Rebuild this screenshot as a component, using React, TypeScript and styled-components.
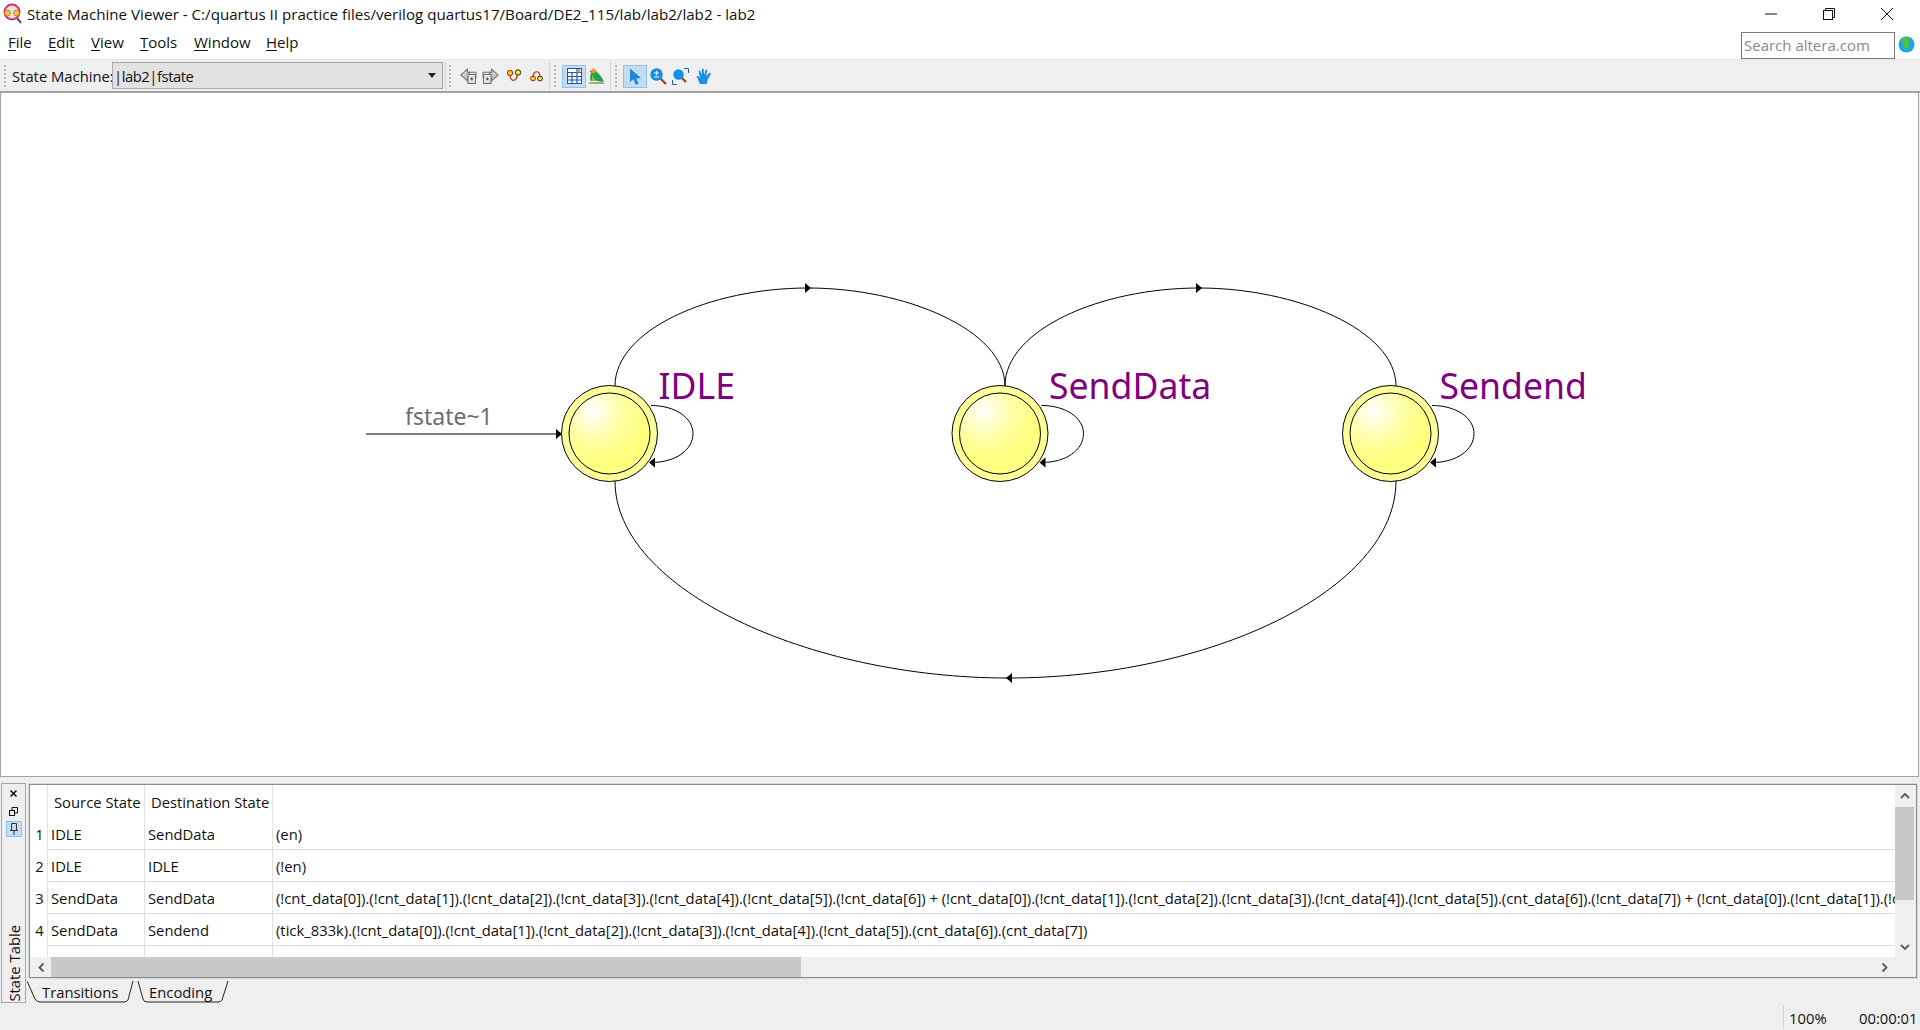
import React from "react";
import styled, { createGlobalStyle } from "styled-components";

const Global = createGlobalStyle`
  html, body { margin: 0; padding: 0; background: #efefef; overflow: hidden; }
  * { box-sizing: border-box; }
`;

const Window = styled.div`
  width: 1920px;
  height: 1030px;
  display: flex;
  flex-direction: column;
  font-family: "Open Sans", "Noto Sans", sans-serif;
  font-size: 14.8px;
  color: #111;
  background: #efefef;
`;

const TitleBar = styled.div`
  height: 27px;
  flex: none;
  background: #fff;
  display: flex;
  align-items: center;
  padding: 0 4px 0 3px;
`;
const TitleText = styled.span`
  margin-left: 4px;
  font-size: 15.15px;
  white-space: nowrap;
  flex: 1;
`;
const WinButton = styled.div`
  width: 58px;
  height: 27px;
  display: flex;
  align-items: center;
  justify-content: center;
`;

const MenuBar = styled.div`
  height: 33px;
  flex: none;
  background: #fff;
  display: flex;
  align-items: center;
  padding-left: 8px;
  border-bottom: 1px solid #e8e8e8;
`;
const MenuItem = styled.span<{ $w: number }>`
  width: ${(p) => p.$w}px;
  font-size: 15px;
  flex: none;
  margin-top: -2px;
  u { text-underline-offset: 2px; }
`;
const SearchBox = styled.div`
  margin-left: auto;
  width: 154px;
  height: 27px;
  margin-top: 5px;
  border: 1px solid #7a7a7a;
  background: #fff;
  color: #8a8a8a;
  font-size: 15px;
  line-height: 25px;
  padding-left: 2px;
  white-space: nowrap;
  overflow: hidden;
`;
const GlobeSlot = styled.div`
  width: 25px;
  flex: none;
  display: flex;
  justify-content: center;
  padding-right: 3px;
  margin-top: 3px;
`;

const Toolbar = styled.div`
  height: 33px;
  flex: none;
  display: flex;
  align-items: center;
  padding-left: 4px;
  background: #efefef;
  border-bottom: 2px solid #a2a2a2;
`;
const Grip = styled.div<{ $ml?: number; $mr?: number }>`
  width: 2px;
  height: 22px;
  flex: none;
  margin-left: ${(p) => p.$ml ?? 0}px;
  margin-right: ${(p) => p.$mr ?? 0}px;
  background: repeating-linear-gradient(to bottom, #b8b8b8 0 2px, transparent 2px 4px);
`;
const Sep = styled.div<{ $ml?: number }>`
  width: 1px;
  height: 28px;
  flex: none;
  background: #d4d4d4;
  margin-left: ${(p) => p.$ml ?? 0}px;
`;
const ComboLabel = styled.span`
  margin-left: 6px;
  width: 100px;
  flex: none;
  font-size: 14.8px;
  white-space: nowrap;
`;
const Combo = styled.div`
  width: 331px;
  height: 27px;
  flex: none;
  display: flex;
  align-items: center;
  justify-content: space-between;
  border: 1px solid #a8a8a8;
  background: #e2e2e2;
  padding: 0 6px 0 1px;
  font-size: 14.8px;
  letter-spacing: -0.45px;
`;
const ComboCaret = styled.span`
  width: 0;
  height: 0;
  border-left: 4px solid transparent;
  border-right: 4px solid transparent;
  border-top: 5px solid #222;
`;
const Tool = styled.div<{ $w?: number; $on?: boolean; $ml?: number }>`
  width: ${(p) => p.$w ?? 22}px;
  height: 23px;
  flex: none;
  margin-left: ${(p) => p.$ml ?? 0}px;
  margin-top: 1px;
  display: flex;
  align-items: center;
  justify-content: center;
  background: ${(p) => (p.$on ? "#c3dcf3" : "transparent")};
  border: 1px solid ${(p) => (p.$on ? "#8fc2ef" : "transparent")};
`;

const Canvas = styled.div`
  flex: none;
  height: 684px;
  background: #fff;
  border: 1px solid #a2a2a2;
  border-top: none;
  margin-right: 1px;
`;
const DiagramSvg = styled.svg`
  display: block;
  width: 100%;
  height: 100%;
  font-family: "Noto Sans", "Open Sans", sans-serif;
`;

const Dock = styled.div`
  flex: none;
  height: 220px;
  margin-top: 6px;
  padding-left: 1px;
  display: flex;
  gap: 3px;
`;
const DockStrip = styled.div`
  width: 25px;
  flex: none;
  border: 1px solid #a6a6a6;
  display: flex;
  flex-direction: column;
  align-items: center;
  padding-top: 1px;
  background: #efefef;
`;
const DockBtn = styled.div<{ $on?: boolean }>`
  width: 16px;
  height: 16px;
  margin-bottom: 2px;
  display: flex;
  align-items: center;
  justify-content: center;
  background: ${(p) => (p.$on ? "#c3dcf3" : "transparent")};
  border: 1px solid ${(p) => (p.$on ? "#8fc2ef" : "transparent")};
`;
const DockTitle = styled.span`
  margin-top: auto;
  writing-mode: vertical-rl;
  transform: rotate(180deg);
  font-size: 14.8px;
  line-height: 20px;
  white-space: nowrap;
`;
const DockMain = styled.div`
  flex: 1;
  min-width: 0;
  display: flex;
  flex-direction: column;
  padding-right: 3px;
`;
const TableFrame = styled.div`
  height: 194px;
  flex: none;
  margin-top: 1px;
  border: 1px solid #8b8b95;
  outline: 1px solid #dadada;
  display: flex;
  flex-direction: column;
  background: #efefef;
`;
const TableRegion = styled.div`
  flex: 1;
  min-height: 0;
  display: flex;
`;
const TableBody = styled.div`
  flex: 1;
  min-width: 0;
  background: #fff;
  overflow: hidden;
`;
const Row = styled.div<{ $h: number; $line?: boolean }>`
  height: ${(p) => p.$h}px;
  display: grid;
  grid-template-columns: 18px 97px 128px 1fr;
  align-items: stretch;
  > * + * {
    border-bottom: ${(p) => (p.$line ? "1px solid #dcdcdc" : "none")};
  }
`;
const Cell = styled.div<{ $pl?: number; $last?: boolean }>`
  padding-left: ${(p) => p.$pl ?? 3}px;
  border-right: ${(p) => (p.$last ? "none" : "1px solid #e2e2e2")};
  display: flex;
  align-items: center;
  font-size: 14.8px;
  white-space: nowrap;
  overflow: hidden;
  min-width: 0;
`;
const NumCell = styled.div`
  border-right: 1px solid #e2e2e2;
  display: flex;
  align-items: center;
  justify-content: center;
  padding-left: 2px;
  font-size: 14.8px;
`;
const VScroll = styled.div`
  width: 21px;
  flex: none;
  display: flex;
  flex-direction: column;
  background: #efefef;
`;
const ScrollBtn = styled.div<{ $s: number }>`
  width: ${(p) => p.$s}px;
  height: 20px;
  flex: none;
  display: flex;
  align-items: center;
  justify-content: center;
`;
const VThumb = styled.div`
  width: 19px;
  height: 93px;
  flex: none;
  margin-top: 2px;
  background: #c8c8c8;
`;
const ScrollSpace = styled.div`
  flex: 1;
`;
const ScrollCorner = styled.div`
  width: 21px;
  flex: none;
`;
const HScroll = styled.div`
  height: 20px;
  flex: none;
  display: flex;
  align-items: center;
  background: #efefef;
`;
const HThumb = styled.div`
  width: 750px;
  height: 20px;
  flex: none;
  background: #c8c8c8;
`;
const TabRow = styled.div`
  display: flex;
  height: 24px;
  margin-top: 2px;
  margin-left: -2px;
`;
const Tab = styled.div<{ $w: number; $ml?: number; $pl: number }>`
  position: relative;
  width: ${(p) => p.$w}px;
  margin-left: ${(p) => p.$ml ?? 0}px;
  padding-left: ${(p) => p.$pl}px;
  font-size: 14.8px;
  line-height: 25px;
  svg {
    position: absolute;
    left: 0;
    top: 0;
  }
`;
const StatusBar = styled.div`
  flex: 1;
  display: flex;
  align-items: center;
  justify-content: flex-end;
  padding-top: 2px;
`;
const StatusPct = styled.span`
  border-left: 1px solid #d4d4d4;
  padding-left: 5px;
  width: 76px;
  height: 23px;
  line-height: 25px;
  font-size: 14.8px;
`;
const StatusTime = styled.span`
  width: 61px;
  font-size: 14.8px;
  line-height: 25px;
  height: 23px;
  white-space: nowrap;
`;

const Arrowhead = ({ x, y, dir }: { x: number; y: number; dir: "l" | "r" }) => (
  <polygon
    points={
      dir === "r"
        ? `${x},${y} ${x - 6},${y - 5} ${x - 6},${y + 5}`
        : `${x},${y} ${x + 6},${y - 5} ${x + 6},${y + 5}`
    }
    fill="#000"
  />
);

const StateNode = ({ cx, name }: { cx: number; name: string }) => (
  <g>
    <circle cx={cx} cy={433.5} r={48} fill="#ffff99" stroke="#000" strokeWidth={1} />
    <circle cx={cx} cy={433.5} r={40.5} fill="url(#stateFill)" stroke="#000" strokeWidth={1} />
    <path
      d={`M${cx + 41.5},405.5 C${cx + 66},405.5 ${cx + 83.5},418 ${cx + 83.5},433.5 C${cx + 83.5},450 ${cx + 66},462.5 ${cx + 42},462.5`}
      fill="none"
      stroke="#000"
    />
    <Arrowhead x={cx + 39.5} y={462.5} dir="l" />
    <text x={cx + 49} y={399} fontSize={35.6} fill="#800080">
      {name}
    </text>
  </g>
);

const Diagram = () => (
  <DiagramSvg viewBox="1 93 1917 683" preserveAspectRatio="none">
    <defs>
      <radialGradient id="stateFill" cx="0.3" cy="0.22" r="0.62">
        <stop offset="0" stopColor="#ffffff" />
        <stop offset="0.55" stopColor="#ffffa8" />
        <stop offset="1" stopColor="#ffff80" />
      </radialGradient>
    </defs>
    <path d="M615,386 C615,330 710,288 808,288 C905,288 1005,330 1005,386" fill="none" stroke="#000" />
    <Arrowhead x={811} y={288} dir="r" />
    <path d="M1005,386 C1005,330 1100,288 1199,288 C1296,288 1396,330 1396,386" fill="none" stroke="#000" />
    <Arrowhead x={1202} y={288} dir="r" />
    <path d="M1396,481 C1396,590 1210,678 1008,678 C810,678 615,590 615,481" fill="none" stroke="#000" />
    <Arrowhead x={1006} y={678} dir="l" />
    <path d="M366,434 H557" fill="none" stroke="#000" />
    <Arrowhead x={562} y={434} dir="r" />
    <text x={405} y={425} fontSize={23} fill="#6e6e6e">
      fstate~1
    </text>
    <StateNode cx={609.5} name="IDLE" />
    <StateNode cx={1000} name="SendData" />
    <StateNode cx={1390.5} name="Sendend" />
  </DiagramSvg>
);

const AppLogo = () => (
  <svg width="20" height="22" viewBox="0 0 20 22">
    <circle cx="9" cy="9" r="7.5" fill="#f6dfe6" stroke="#c9386a" strokeWidth="2" />
    <circle cx="9" cy="9" r="3.5" fill="#dfe6f0" />
    <circle cx="4.5" cy="10" r="3" fill="#f2c43c" stroke="#8a6a10" strokeWidth="0.6" />
    <circle cx="13.5" cy="10" r="3" fill="#f2c43c" stroke="#8a6a10" strokeWidth="0.6" />
    <path d="M14,15 L18,20" stroke="#5a5a5a" strokeWidth="2.2" />
  </svg>
);
const Globe = () => (
  <svg width="17" height="17" viewBox="0 0 17 17">
    <circle cx="8.5" cy="8.5" r="8" fill="#1ba6ea" />
    <path d="M5,2 L10,1.6 L12,3.5 L10,6 L12,8 L9,12 L8,15 L6.5,11 L5,8 L3,6 Z" fill="#54c22c" />
  </svg>
);
const GoArrow = ({ flip }: { flip?: boolean }) => (
  <svg width="17" height="16" viewBox="0 0 16 15" style={flip ? { transform: "scaleX(-1)" } : undefined}>
    <path d="M7,1 L0.8,6.5 L7,12 V9 H9 V4 H7 Z" fill="#c8c8c8" stroke="#777" strokeWidth="1" />
    <path d="M7,4 H15 V9 H13" fill="none" stroke="#777" />
    <rect x="7.5" y="6" width="7" height="8.5" fill="#e6e6e6" stroke="#6e6e6e" />
    <rect x="10" y="9" width="2" height="2.5" fill="#555" />
  </svg>
);
const NodesA = () => (
  <svg width="15" height="14" viewBox="0 0 15 14">
    <path d="M3,7 C4,13 10,13 10.5,5" fill="none" stroke="#d02020" strokeWidth="1.2" />
    <circle cx="3" cy="4" r="2.7" fill="#ffd21e" stroke="#c01818" />
    <circle cx="11" cy="3.5" r="2.7" fill="#f6ee2c" stroke="#222" />
  </svg>
);
const NodesB = () => (
  <svg width="13" height="12" viewBox="0 0 13 12">
    <path d="M3,7 C3,0 10,0 10,7" fill="none" stroke="#d02020" strokeWidth="1.2" />
    <circle cx="3" cy="8.5" r="2.4" fill="#ffd21e" stroke="#c01818" />
    <circle cx="10" cy="8.5" r="2.4" fill="#f6ee2c" stroke="#222" />
  </svg>
);
const TableIcon = () => (
  <svg width="15" height="16" viewBox="0 0 15 16">
    <rect x="0.5" y="0.5" width="14" height="15" fill="#fff" stroke="#1a5ca8" />
    <path d="M0,4.5 H15 M0,8.5 H15 M0,12 H15 M5,4.5 V16 M10,0 V16" stroke="#1a5ca8" strokeWidth="1.2" />
    <rect x="9.8" y="1" width="3.2" height="3.4" fill="#f2902a" />
  </svg>
);
const Bird = () => (
  <svg width="17" height="17" viewBox="0 0 17 17">
    <path d="M0,16 H17 L15,14 H2 Z" fill="#b6a58e" />
    <path d="M3,13 C1,9 3,4 5,2 L8,3 C11,6 14,9 16,14 L8,13 Z" fill="#22a04a" />
    <path d="M4,6 C5,9 7,12 10,13 L4,13 Z" fill="#7ac943" />
    <circle cx="5.5" cy="3" r="2.4" fill="#f29a2a" />
    <path d="M3,2.5 L1.5,4 L3.4,4.2 Z" fill="#8a2a10" />
  </svg>
);
const Pointer = () => (
  <svg width="14" height="17" viewBox="0 0 14 17">
    <path d="M2,0.5 L13,10 L8.3,10.4 L10.6,16 L7.5,16.5 L5.5,11 L2,14 Z" fill="#1a86dc" />
  </svg>
);
const ZoomIn = () => (
  <svg width="17" height="17" viewBox="0 0 17 17">
    <path d="M10.5,10.5 L16,16" stroke="#b5342a" strokeWidth="2.2" />
    <circle cx="6.5" cy="6.5" r="6.2" fill="#0f90e0" />
    <path d="M4,5 H9 M6.5,2.8 V7.2 M4,9 H9" stroke="#fff" strokeWidth="1.2" />
  </svg>
);
const ZoomRegion = () => (
  <svg width="17" height="17" viewBox="0 0 17 17">
    <path d="M0.5,12 V16.5 H5 M12,0.5 H16.5 V5" fill="none" stroke="#1a5ca8" strokeWidth="1" />
    <path d="M9.5,9.5 L14,14" stroke="#b5342a" strokeWidth="2.2" />
    <circle cx="6.5" cy="6.5" r="5.2" fill="#0f90e0" />
  </svg>
);
const HandIcon = () => (
  <svg width="16" height="17" viewBox="0 0 16 17">
    <path
      d="M4,16 L0.5,8.5 L1.8,7.8 L4,10 L2.6,3 L4.2,2.6 L6,7 L5.8,1 L7.6,0.8 L8.2,7 L9.6,1.6 L11.2,2 L10.2,8 L13.8,4.6 L15,5.8 L11.6,11.5 L10.8,16 Z"
      fill="#1890e6"
    />
  </svg>
);
const Minimize = () => (
  <svg width="12" height="12" viewBox="0 0 12 12">
    <path d="M0,6 H12" stroke="#111" />
  </svg>
);
const Restore = () => (
  <svg width="12" height="12" viewBox="0 0 12 12">
    <rect x="0.5" y="2.5" width="9" height="9" fill="#fff" stroke="#111" />
    <path d="M2.5,2.5 V0.5 H11.5 V9.5 H9.5" fill="none" stroke="#111" />
  </svg>
);
const CloseX = () => (
  <svg width="12" height="12" viewBox="0 0 12 12">
    <path d="M0,0 L12,12 M12,0 L0,12" stroke="#111" />
  </svg>
);
const Chevron = ({ dir }: { dir: "up" | "down" | "left" | "right" }) => {
  const rot = { up: 0, right: 90, down: 180, left: 270 }[dir];
  return (
    <svg width="10" height="7" viewBox="0 0 10 7" style={{ transform: `rotate(${rot}deg)` }}>
      <path d="M1,6 L5,2 L9,6" fill="none" stroke="#5a5a5a" strokeWidth="1.8" />
    </svg>
  );
};
const DockClose = () => (
  <svg width="7" height="7" viewBox="0 0 7 7">
    <path d="M0.5,0.5 L6.5,6.5 M6.5,0.5 L0.5,6.5" stroke="#111" strokeWidth="1.5" />
  </svg>
);
const DockFloat = () => (
  <svg width="9" height="9" viewBox="0 0 9 9">
    <rect x="0.5" y="3.5" width="5" height="5" fill="none" stroke="#111" />
    <path d="M3,3 V0.5 H8.5 V6 H6" fill="none" stroke="#111" />
  </svg>
);
const DockPin = () => (
  <svg width="8" height="12" viewBox="0 0 8 12">
    <path d="M1.5,0.5 H6.5 V7.5 H1.5 Z M0,7.5 H8 M4,8 V12" fill="none" stroke="#333" />
  </svg>
);

const TabShape = ({ w, d }: { w: number; d: string }) => (
  <svg width={w} height="24" viewBox={`0 0 ${w} 24`}>
    <path d={d} fill="none" stroke="#222" />
  </svg>
);

const ROW3 =
  "(!cnt_data[0]).(!cnt_data[1]).(!cnt_data[2]).(!cnt_data[3]).(!cnt_data[4]).(!cnt_data[5]).(!cnt_data[6]) + (!cnt_data[0]).(!cnt_data[1]).(!cnt_data[2]).(!cnt_data[3]).(!cnt_data[4]).(!cnt_data[5]).(cnt_data[6]).(!cnt_data[7]) + (!cnt_data[0]).(!cnt_data[1]).(!cnt_data[2]).(!cnt_data[3])";
const ROW4 =
  "(tick_833k).(!cnt_data[0]).(!cnt_data[1]).(!cnt_data[2]).(!cnt_data[3]).(!cnt_data[4]).(!cnt_data[5]).(cnt_data[6]).(cnt_data[7])";

const rows = [
  ["1", "IDLE", "SendData", "(en)"],
  ["2", "IDLE", "IDLE", "(!en)"],
  ["3", "SendData", "SendData", ROW3],
  ["4", "SendData", "Sendend", ROW4],
];

export default function App() {
  return (
    <Window>
      <Global />
      <TitleBar>
        <AppLogo />
        <TitleText>
          State Machine Viewer - C:/quartus II practice files/verilog quartus17/Board/DE2_115/lab/lab2/lab2 - lab2
        </TitleText>
        <WinButton><Minimize /></WinButton>
        <WinButton><Restore /></WinButton>
        <WinButton><CloseX /></WinButton>
      </TitleBar>
      <MenuBar>
        <MenuItem $w={40}><u>F</u>ile</MenuItem>
        <MenuItem $w={43}><u>E</u>dit</MenuItem>
        <MenuItem $w={49}><u>V</u>iew</MenuItem>
        <MenuItem $w={54}><u>T</u>ools</MenuItem>
        <MenuItem $w={72}><u>W</u>indow</MenuItem>
        <MenuItem $w={40}><u>H</u>elp</MenuItem>
        <SearchBox>Search altera.com</SearchBox>
        <GlobeSlot><Globe /></GlobeSlot>
      </MenuBar>
      <Toolbar>
        <Grip />
        <ComboLabel>State Machine:</ComboLabel>
        <Combo>
          <span>|lab2|fstate</span>
          <ComboCaret />
        </Combo>
        <Sep $ml={2} />
        <Grip $ml={3} $mr={6} />
        <Tool><GoArrow /></Tool>
        <Tool><GoArrow flip /></Tool>
        <Tool $ml={2}><NodesA /></Tool>
        <Tool><NodesB /></Tool>
        <Sep $ml={2} />
        <Grip $ml={4} $mr={6} />
        <Tool $w={24} $on><TableIcon /></Tool>
        <Tool $w={20}><Bird /></Tool>
        <Sep $ml={4} />
        <Grip $ml={4} $mr={6} />
        <Tool $w={24} $on><Pointer /></Tool>
        <Tool $w={22}><ZoomIn /></Tool>
        <Tool $w={23}><ZoomRegion /></Tool>
        <Tool $w={24}><HandIcon /></Tool>
      </Toolbar>
      <Canvas>
        <Diagram />
      </Canvas>
      <Dock>
        <DockStrip>
          <DockBtn><DockClose /></DockBtn>
          <DockBtn><DockFloat /></DockBtn>
          <DockBtn $on><DockPin /></DockBtn>
          <DockTitle>State Table</DockTitle>
        </DockStrip>
        <DockMain>
          <TableFrame>
            <TableRegion>
              <TableBody>
                <Row $h={33}>
                  <NumCell />
                  <Cell $pl={6}>Source State</Cell>
                  <Cell $pl={6}>Destination State</Cell>
                  <Cell $last />
                </Row>
                {rows.map((r) => (
                  <Row key={r[0]} $h={32} $line>
                    <NumCell>{r[0]}</NumCell>
                    <Cell>{r[1]}</Cell>
                    <Cell>{r[2]}</Cell>
                    <Cell $last>{r[3]}</Cell>
                  </Row>
                ))}
                <Row $h={11}>
                  <NumCell />
                  <Cell />
                  <Cell />
                  <Cell $last />
                </Row>
              </TableBody>
              <VScroll>
                <ScrollBtn $s={20}><Chevron dir="up" /></ScrollBtn>
                <VThumb />
                <ScrollSpace />
                <ScrollBtn $s={20}><Chevron dir="down" /></ScrollBtn>
              </VScroll>
            </TableRegion>
            <HScroll>
              <ScrollBtn $s={21}><Chevron dir="left" /></ScrollBtn>
              <HThumb />
              <ScrollSpace />
              <ScrollBtn $s={21}><Chevron dir="right" /></ScrollBtn>
              <ScrollCorner />
            </HScroll>
          </TableFrame>
          <TabRow>
            <Tab $w={107} $pl={15}>
              <TabShape w={107} d="M0,1 L8,19 Q10,22 13,22 H97 Q100,22 101,20 L106,1" />
              Transitions
            </Tab>
            <Tab $w={92} $ml={3} $pl={12}>
              <TabShape w={92} d="M1,1 L6,19 Q7,22 10,22 H81 Q84,22 85,20 L91,1" />
              Encoding
            </Tab>
          </TabRow>
        </DockMain>
      </Dock>
      <StatusBar>
        <StatusPct>100%</StatusPct>
        <StatusTime>00:00:01</StatusTime>
      </StatusBar>
    </Window>
  );
}
